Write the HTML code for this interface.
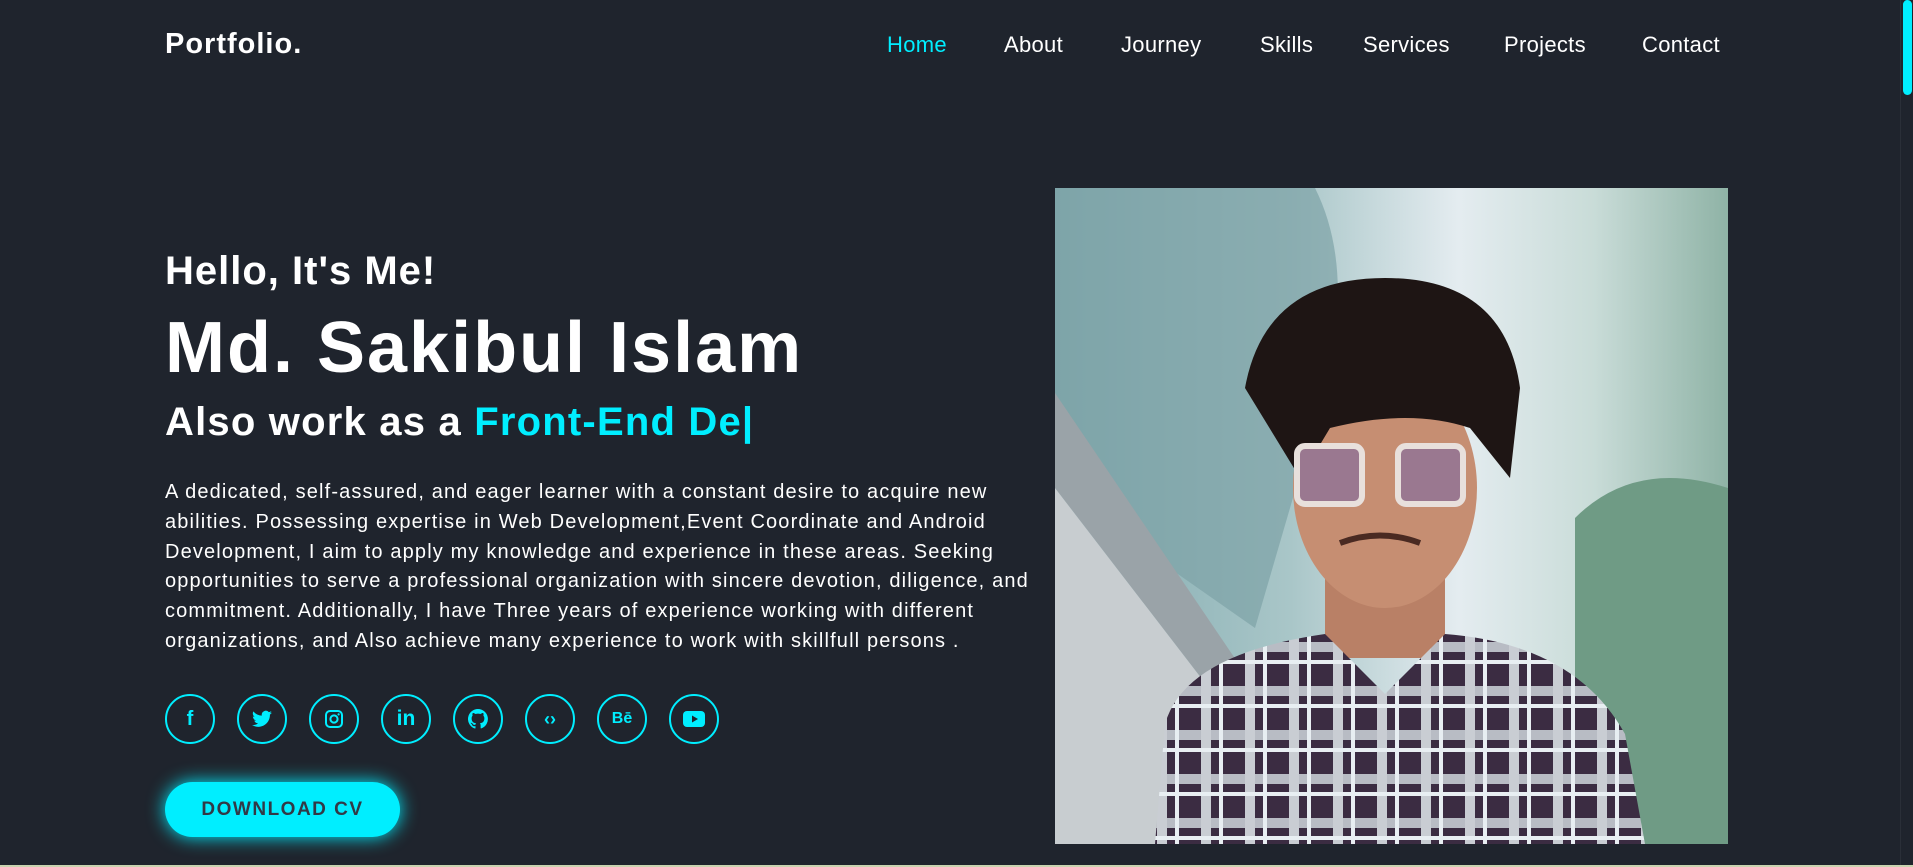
<!DOCTYPE html>
<html><head><meta charset="utf-8"><style>
*{margin:0;padding:0;box-sizing:border-box}
html,body{width:1913px;height:867px;overflow:hidden;background:#1f242d;font-family:"Liberation Sans",sans-serif;color:#fff}
.logo{position:absolute;left:165px;top:28px;font-size:29px;font-weight:bold;letter-spacing:1px}
.nav a{position:absolute;top:32px;font-size:22px;color:#fff;text-decoration:none;letter-spacing:.3px}
.sb{position:absolute;right:0;top:0;width:13px;height:867px;background:#1f242d;border-left:1px solid #2a2f38}
.sb i{position:absolute;left:2px;top:0;width:9px;height:95px;background:#00eeff;border-radius:5px}
h3{position:absolute;left:165px;top:249px;font-size:40px;font-weight:bold;letter-spacing:1px}
h1{position:absolute;left:165px;top:307px;font-size:72px;font-weight:bold;letter-spacing:2px}
h2{position:absolute;left:165px;top:400px;font-size:40px;font-weight:bold;letter-spacing:1.2px}
h2 span{color:#00eeff}
p{position:absolute;left:165px;top:478px;font-size:20px;line-height:29.8px;width:900px;letter-spacing:1.15px}
.ic{position:absolute;top:694px;width:50px;height:50px;border:2px solid #00eeff;border-radius:50%;display:flex;align-items:center;justify-content:center;color:#00eeff;font-weight:bold}
.btn{position:absolute;left:165px;top:782px;width:235px;height:55px;border-radius:28px;background:#00eeff;box-shadow:0 0 18px #00eeff;color:#323946;font-size:19px;letter-spacing:1.5px;font-weight:bold;display:flex;align-items:center;justify-content:center}
.photo{position:absolute;left:1055px;top:188px;width:673px;height:656px}
.bot{position:absolute;left:0;top:865px;width:1913px;height:2px;background:#c9d3b0}
</style></head><body>
<div class="logo">Portfolio.</div>
<div class="nav">
<a style="left:887px;color:#00eeff">Home</a><a style="left:1004px">About</a><a style="left:1121px">Journey</a><a style="left:1260px">Skills</a><a style="left:1363px">Services</a><a style="left:1504px">Projects</a><a style="left:1642px">Contact</a>
</div>
<div class="sb"><i></i></div>
<h3>Hello, It's Me!</h3>
<h1>Md. Sakibul Islam</h1>
<h2>Also work as a <span>Front-End De|</span></h2>
<p>A dedicated, self-assured, and eager learner with a constant desire to acquire new<br>abilities. Possessing expertise in Web Development,Event Coordinate and Android<br>Development, I aim to apply my knowledge and experience in these areas. Seeking<br>opportunities to serve a professional organization with sincere devotion, diligence, and<br>commitment. Additionally, I have Three years of experience working with different<br>organizations, and Also achieve many experience to work with skillfull persons .</p>
<div class="ic" style="left:165px;font-size:20px">f</div>
<div class="ic" style="left:237px"><svg width="20" height="18" viewBox="0 0 24 20"><path fill="#00eeff" d="M24 2.4a10 10 0 0 1-2.8.8A5 5 0 0 0 23.3.5a10 10 0 0 1-3.1 1.2A4.9 4.9 0 0 0 11.800 6 14 14 0 0 1 1.7.9a4.9 4.9 0 0 0 1.5 6.6A5 5 0 0 1 1 6.9a4.9 4.9 0 0 0 3.9 4.8 5 5 0 0 1-2.2.1 4.9 4.9 0 0 0 4.6 3.4A9.9 9.9 0 0 1 0 17.2 14 14 0 0 0 7.5 19.4c9 0 14-7.5 14-14v-.6A10 10 0 0 0 24 2.4z"/></svg></div>
<div class="ic" style="left:309px"><svg width="20" height="20" viewBox="0 0 20 20"><rect x="2" y="2" width="16" height="16" rx="4" fill="none" stroke="#00eeff" stroke-width="2"/><circle cx="10" cy="10" r="3.6" fill="none" stroke="#00eeff" stroke-width="2"/><circle cx="14.6" cy="5.4" r="1.1" fill="#00eeff"/></svg></div>
<div class="ic" style="left:381px;font-size:21px">in</div>
<div class="ic" style="left:453px"><svg width="20" height="20" viewBox="0 0 16 16"><path fill="#00eeff" d="M8 0a8 8 0 0 0-2.5 15.6c.4 0 .5-.2.5-.4v-1.5c-2.200.5-2.7-1-2.7-1-.4-.9-.9-1.2-.9-1.200-.7-.5.1-.5.1-.5.8.1 1.2.8 1.2.8.7 1.3 1.9.9 2.3.7.1-.5.3-.9.5-1.1-1.8-.2-3.6-.9-3.6-4 0-.9.3-1.6.8-2.1-.1-.2-.4-1 .1-2.1 0 0 .7-.2 2.2.8a7.5 7.5 0 0 1 4 0c1.5-1 2.2-.8 2.2-.8.4 1.1.2 1.9.1 2.1.5.6.8 1.3.8 2.1 0 3.1-1.9 3.8-3.6 4 .3.3.6.8.6 1.5v2.2c0 .2.1.5.6.4A8 8 0 0 0 8 0z"/></svg></div>
<div class="ic" style="left:525px;font-size:18px">‹›</div>
<div class="ic" style="left:597px;font-size:16px">Bē</div>
<div class="ic" style="left:669px"><svg width="22" height="16" viewBox="0 0 22 16"><rect width="22" height="16" rx="4" fill="#00eeff"/><path d="M9 4.5v7l6-3.5z" fill="#1f242d"/></svg></div>
<div class="btn">DOWNLOAD CV</div>
<svg class="photo" viewBox="0 0 673 656" preserveAspectRatio="none">
<defs>
<linearGradient id="sky" x1="0" y1="0" x2="1" y2="0"><stop offset="0" stop-color="#7fa9ae"/><stop offset=".35" stop-color="#a9c6c8"/><stop offset=".6" stop-color="#e4ecf0"/><stop offset=".8" stop-color="#c9dcd8"/><stop offset="1" stop-color="#8fb3a6"/></linearGradient>
<pattern id="chk" width="44" height="44" patternUnits="userSpaceOnUse"><rect width="44" height="44" fill="#3b2c42"/><rect x="0" y="14" width="44" height="10" fill="#b8bcc4"/><rect x="14" y="0" width="10" height="44" fill="#c9cdd3"/><rect x="32" y="0" width="4" height="44" fill="#e8eef2"/><rect x="0" y="32" width="44" height="4" fill="#e8eef2"/></pattern>
</defs>
<rect width="673" height="656" fill="url(#sky)"/>
<path d="M520 656V330q60-60 153-30V656z" fill="#6f9b85"/>
<path d="M0 0h260q40 80 10 200L200 440 0 300z" fill="#7da3a6" opacity=".7"/>
<path d="M0 205L200 500 200 560 0 300z" fill="#9aa3a8"/>
<path d="M0 300L200 560 200 656 0 656z" fill="#c8cdd0"/>
<rect x="270" y="380" width="120" height="90" fill="#b98066"/>
<ellipse cx="330" cy="300" rx="92" ry="120" fill="#c68e72"/>
<path d="M190 200q20-110 140-110t135 110l-10 90-40-50q-60-20-140 0l-30 50z" fill="#1e1514"/>
<rect x="242" y="258" width="65" height="58" rx="8" fill="#9a7890" stroke="#e8e0dc" stroke-width="6"/>
<rect x="343" y="258" width="65" height="58" rx="8" fill="#9a7890" stroke="#e8e0dc" stroke-width="6"/>
<path d="M285 355q40-15 80 0" stroke="#4a2a22" stroke-width="6" fill="none"/>
<path d="M100 656l10-120q20-70 160-90l60 60 60-60q130 10 180 100l20 110z" fill="url(#chk)"/>
</svg>
<div class="bot"></div>
</body></html>
